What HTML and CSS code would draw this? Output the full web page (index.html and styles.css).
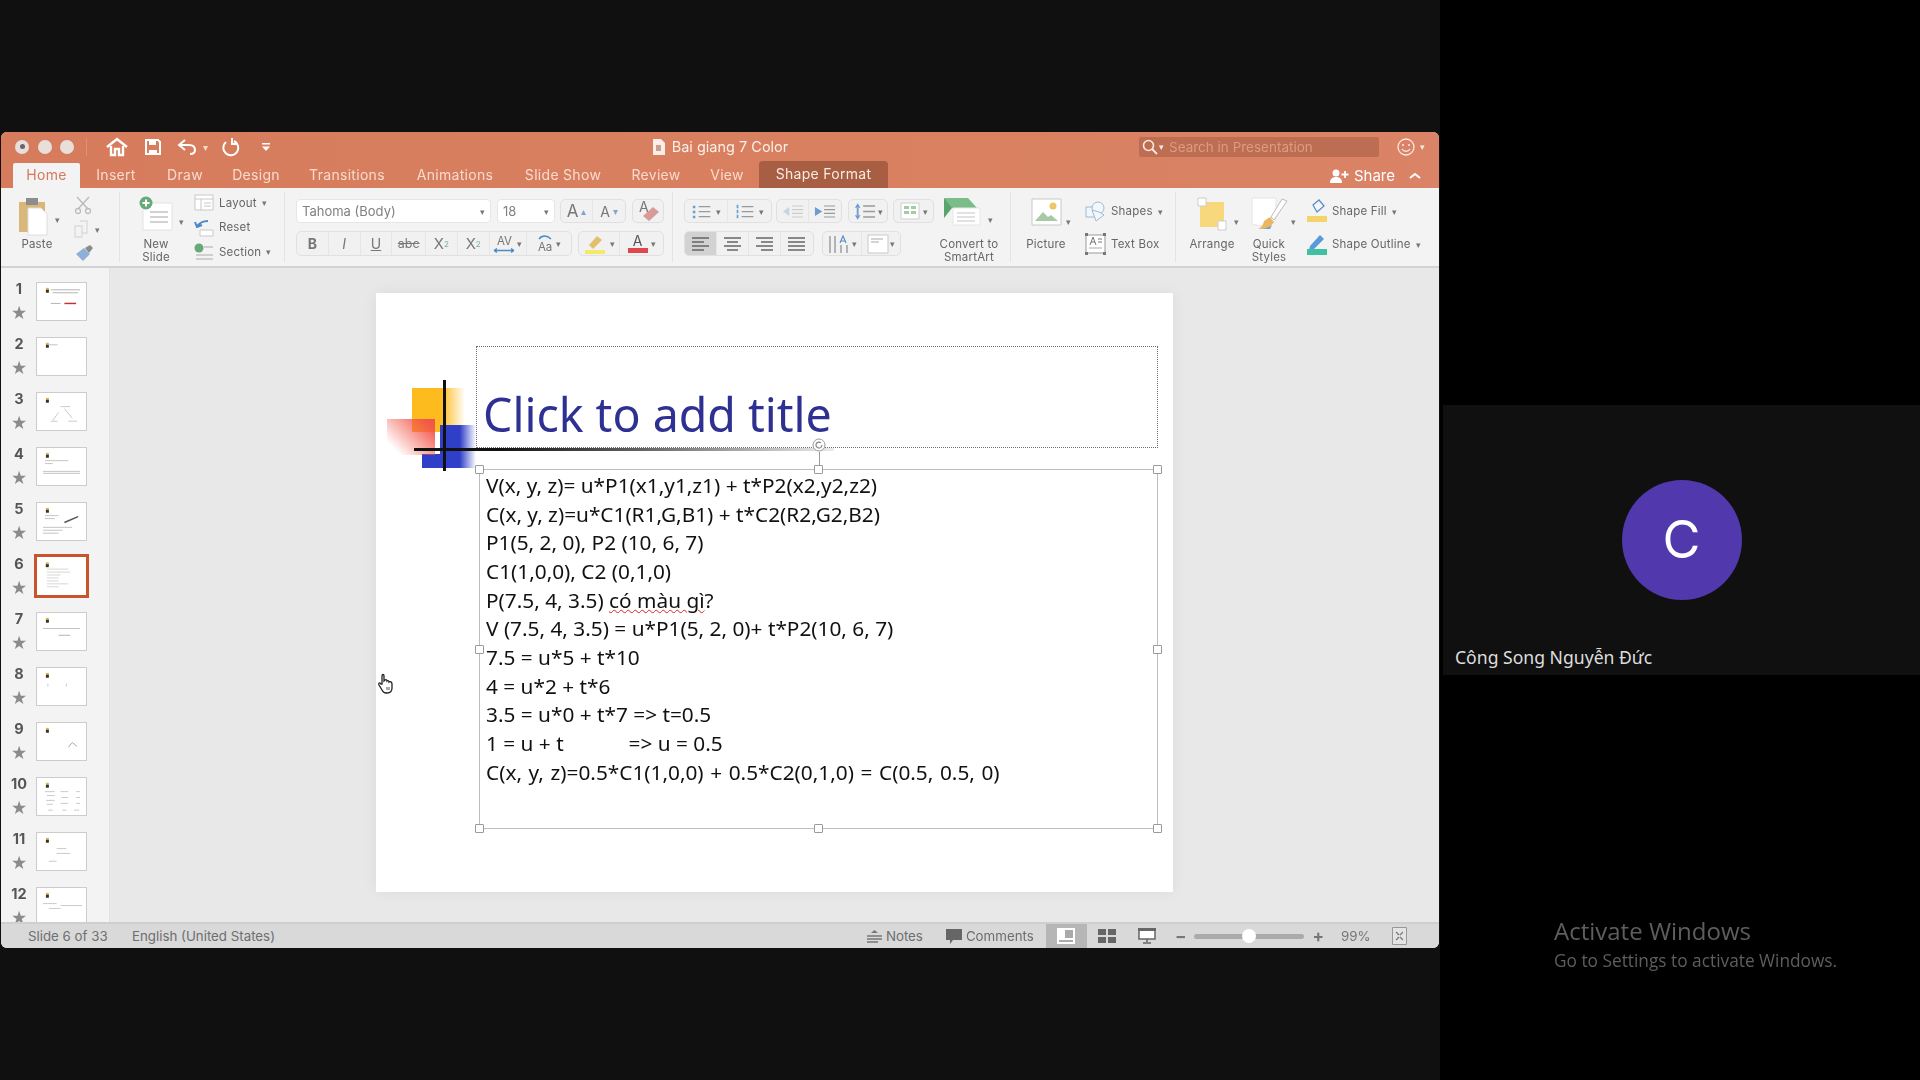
FILE: index.html
```html
<!DOCTYPE html>
<html lang="en">
<head>
<meta charset="utf-8">
<title>Bai giang 7 Color</title>
<link rel="stylesheet" href="styles.css">
</head>
<body>
<main class="share">
  <section class="window">
    <header class="chrome">
      <div class="titlerow">
        <div class="qat">
          <span class="light"><i></i></span><span class="light"></span><span class="light"></span>
          <span class="qat-sep"></span>
          <svg class="q-home" width="24" height="20" viewBox="0 0 24 20"><path d="M2 10 12 2l10 8M6 9v9h4v-6h4v6h4V9" fill="none" stroke="#fff" stroke-width="2.4"/></svg>
          <svg class="q-save" width="18" height="18" viewBox="0 0 18 18"><path d="M2 2h12l2 2v12H2z" fill="none" stroke="#fff" stroke-width="2"/><path d="M5 2h7v5H5zM5 12h8v4H5z" fill="#fff"/></svg>
          <svg class="q-undo" width="20" height="18" viewBox="0 0 20 18"><path d="M8 2 2 7l6 5M2 7h10c4 0 6 2 6 5s-2 4-5 4" fill="none" stroke="#fff" stroke-width="2"/></svg>
          <span class="q-dd">▾</span>
          <svg class="q-redo" width="20" height="20" viewBox="0 0 20 20"><path d="M13 4a7.5 7.5 0 1 1-8 1M11 1v6h6" fill="none" stroke="#fff" stroke-width="2"/></svg>
          <svg class="q-more" width="10" height="10" viewBox="0 0 10 10"><path d="M1 1h8v1.5H1z" fill="#fff"/><path d="M1 4.500h8L5 9z" fill="#fff"/></svg>
        </div>
        <div class="doc">
          <svg width="14" height="16" viewBox="0 0 14 16"><path d="M1 0h8l4 4v12H1z" fill="#fbeee8"/><path d="M4 6h5v6H4z" fill="#c9a08f"/></svg>
          <span>Bai giang 7 Color</span>
        </div>
        <div class="titleright">
          <div class="search">
            <svg width="16" height="16" viewBox="0 0 16 16"><circle cx="6.500" cy="6.500" r="5" fill="none" stroke="#fbe9e2" stroke-width="1.600"/><path d="m10 10 5 5" stroke="#fbe9e2" stroke-width="1.800"/></svg>
            <span class="search-dd">▾</span>
            <span>Search in Presentation</span>
          </div>
          <svg class="smile" width="18" height="18" viewBox="0 0 18 18"><circle cx="9" cy="9" r="8" fill="none" stroke="#fbe9e2" stroke-width="1.300"/><circle cx="6" cy="7" r="1.100" fill="#fbe9e2"/><circle cx="12" cy="7" r="1.100" fill="#fbe9e2"/><path d="M5 11c2 3 6 3 8 0" fill="none" stroke="#fbe9e2" stroke-width="1.300"/></svg>
          <span class="smile-dd">▾</span>
        </div>
      </div>
      <nav class="tabs">
        <span class="tab tab-home">Home</span>
        <span class="tab tab-insert">Insert</span>
        <span class="tab tab-draw">Draw</span>
        <span class="tab tab-design">Design</span>
        <span class="tab tab-trans">Transitions</span>
        <span class="tab tab-anim">Animations</span>
        <span class="tab tab-show">Slide Show</span>
        <span class="tab tab-review">Review</span>
        <span class="tab tab-view">View</span>
        <span class="tab tab-format">Shape Format</span>
        <div class="share-btn">
          <svg width="19" height="14" viewBox="0 0 19 14"><circle cx="6" cy="4" r="3.500" fill="#fff"/><path d="M0 14c0-5 3-6 6-6s6 1 6 6z" fill="#fff"/><path d="M15 2v7M11.500 5.500h7" stroke="#fff" stroke-width="1.800"/></svg>
          <span>Share</span>
          <svg class="chev" width="12" height="8" viewBox="0 0 12 8"><path d="m1 6 5-4 5 4" fill="none" stroke="#fff" stroke-width="2"/></svg>
        </div>
      </nav>
    </header>

    <div class="ribbon">
      <div class="group g-clip">
        <div class="big b-paste">
          <svg class="big-icon" width="36" height="43" viewBox="0 0 36 43"><path d="M0 7h26v30H0z" fill="#d9b779"/><path d="M7 3h12v7H7z" fill="#8d8d8d"/><path d="M9 13h13l6 6v21H9z" fill="#fff" stroke="#ddd"/></svg>
          <span class="label">Paste</span>
        </div>
        <span class="dd dd-paste">▾</span>
        <div class="clip-tools">
          <svg width="18" height="18" viewBox="0 0 18 18"><path d="m3 1 11 12M15 1 4 13" stroke="#bdbdbd" stroke-width="1.500"/><circle cx="4" cy="15" r="2.500" fill="none" stroke="#bdbdbd" stroke-width="1.300"/><circle cx="14" cy="15" r="2.500" fill="none" stroke="#bdbdbd" stroke-width="1.300"/></svg>
          <div class="copy"><svg width="16" height="18" viewBox="0 0 16 18"><path d="M1 6h7v11H1zM6 1h7v12H8" fill="none" stroke="#dcdcdc" stroke-width="1.400"/></svg><span class="dd">▾</span></div>
          <svg width="20" height="18" viewBox="0 0 20 18"><path d="M11 4l5-3 3 3-4 5z" fill="#8a8a8a"/><path d="M2 10l8-6 6 6-7 7z" fill="#8fb0d6"/></svg>
        </div>
      </div>

      <div class="group g-slides">
        <div class="big b-new">
          <svg class="big-icon" width="34" height="43" viewBox="0 0 34 43"><path d="M4 8h29v27H4z" fill="#fff" stroke="#e2e2e2"/><path d="M11 17h18M11 22h18M11 27h18" stroke="#c4c4c4" stroke-width="1.300"/><circle cx="7" cy="8" r="6.500" fill="#66aa7a"/><path d="M7 4.500v7M3.500 8h7" stroke="#fff" stroke-width="2"/></svg>
          <span class="label">New<br>Slide</span>
        </div>
        <span class="dd dd-new">▾</span>
        <div class="mini-list">
          <div class="mini"><svg width="20" height="17" viewBox="0 0 20 17"><path d="M1 1h18v15H1z" fill="#fff" stroke="#c8c8c8"/><path d="M1 5h18M7 5v11M10 9h7M10 12h7" stroke="#c8c8c8"/></svg><span>Layout</span><span class="dd">▾</span></div>
          <div class="mini"><svg width="20" height="19" viewBox="0 0 20 19"><path d="M6 12h13v6H6z" fill="#fff" stroke="#c8c8c8"/><path d="M14 3C8 3 5 5 3 9M1 4l2 5 5-2" fill="none" stroke="#4a8ac6" stroke-width="2"/></svg><span>Reset</span></div>
          <div class="mini"><svg width="20" height="18" viewBox="0 0 20 18"><circle cx="5" cy="5" r="4.500" fill="#66aa7a"/><path d="M10 4h9M2 12h17M2 16h17" stroke="#c4c4c4" stroke-width="1.400"/></svg><span>Section</span><span class="dd">▾</span></div>
        </div>
      </div>

      <div class="group g-font">
        <div class="row">
          <div class="select s-font"><span>Tahoma (Body)</span><span class="dd">▾</span></div>
          <div class="select s-size"><span>18</span><span class="dd">▾</span></div>
          <div class="seg s-grow"><span class="btn"><b class="aa">A</b><i class="up">▴</i></span><span class="btn"><b class="aa small">A</b><i class="up">▾</i></span></div>
          <div class="seg s-clear">
            <span class="clear-a">A</span>
            <svg width="18" height="16" viewBox="0 0 18 16"><path d="m1 10 10-9 6 5-10 9z" fill="#d99a9a"/></svg>
          </div>
        </div>
        <div class="row">
          <div class="seg s-style">
            <span class="btn w-b"><b>B</b></span><span class="btn w-b"><em>I</em></span><span class="btn w-b"><u>U</u></span><span class="btn w-abc"><s>abc</s></span><span class="btn w-b sup">X<sup>2</sup></span><span class="btn w-b sup">X<sub>2</sub></span>
            <span class="btn w-av"><span class="stack"><span>AV</span><svg width="22" height="5" viewBox="0 0 22 5"><path d="M1 2.500h20M1 2.500l3-2M1 2.500l3 2M21 2.500l-3-2M21 2.500l-3 2" stroke="#4a8ac6" stroke-width="1.300" fill="none"/></svg></span><span class="dd">▾</span></span>
            <span class="btn w-aa"><span class="stack"><svg width="16" height="5" viewBox="0 0 16 5"><path d="M2 4c3-4 8-4 12 0" stroke="#4a8ac6" stroke-width="1.400" fill="none"/></svg><span>Aa</span></span><span class="dd">▾</span></span>
          </div>
          <div class="seg s-color">
            <span class="btn w-hl"><svg width="24" height="22" viewBox="0 0 24 22"><path d="m6 12 8-9 5 4-9 9z" fill="#e2bf6f"/><path d="M2 17h20v4H2z" fill="#f2ea68"/></svg><span class="dd">▾</span></span>
            <span class="btn w-col"><span class="stack col"><span>A</span><i></i></span><span class="dd">▾</span></span>
          </div>
        </div>
      </div>

      <div class="group g-para">
        <div class="row">
          <div class="seg s-lists">
            <span class="btn w-list"><svg width="20" height="15" viewBox="0 0 24 18"><path d="M8 3h14M8 9h14M8 15h14" stroke="#999" stroke-width="1.500"/><path d="M1 2h3v3H1zM1 8h3v3H1zM1 14h3v3H1z" fill="#6a9ecf"/></svg><span class="dd">▾</span></span>
            <span class="btn w-list"><svg width="20" height="15" viewBox="0 0 24 18"><path d="M8 3h14M8 9h14M8 15h14" stroke="#999" stroke-width="1.500"/><path d="M2 1h2v4H2zM2 7h2v4H2zM2 13h2v4H2z" fill="#6a9ecf"/></svg><span class="dd">▾</span></span>
          </div>
          <div class="seg s-indent">
            <span class="btn w-ind"><svg width="22" height="15" viewBox="0 0 24 16"><path d="M11 2h12M11 6h12M11 10h12M11 14h12" stroke="#ccc" stroke-width="1.300"/><path d="M8 3v10L1 8z" fill="#c3d6e8"/></svg></span>
            <span class="btn w-ind"><svg width="22" height="15" viewBox="0 0 24 16"><path d="M11 2h12M11 6h12M11 10h12M11 14h12" stroke="#999" stroke-width="1.300"/><path d="M1 3v10l8-5z" fill="#6a9ecf"/></svg></span>
          </div>
          <div class="seg s-spacing"><svg width="22" height="19" viewBox="0 0 24 20"><path d="M10 4h13M10 10h13M10 16h13" stroke="#999" stroke-width="1.500"/><path d="M1 6 4 1l3 5zM1 14l3 5 3-5z" fill="#6a9ecf"/><path d="M3 6h2v8H3z" fill="#6a9ecf"/></svg><span class="dd">▾</span></div>
          <div class="seg s-cols"><svg width="20" height="18" viewBox="0 0 20 18"><path d="M1 1h18v16H1z" fill="#fff" stroke="#cfcfcf"/><path d="M4 4h5v3H4zM11 4h5v3h-5zM4 9h5v3H4zM11 9h5v3h-5z" fill="#a3cba6"/></svg><span class="dd">▾</span></div>
        </div>
        <div class="row">
          <div class="seg s-align">
            <span class="btn w-al on"><svg width="18" height="16" viewBox="0 0 18 16"><path d="M0 2h17M0 6h12M0 10h17M0 14h12" stroke="#666" stroke-width="1.500"/></svg></span>
            <span class="btn w-al"><svg width="18" height="16" viewBox="0 0 18 16"><path d="M0 2h17M3 6h11M0 10h17M3 14h11" stroke="#666" stroke-width="1.500"/></svg></span>
            <span class="btn w-al"><svg width="18" height="16" viewBox="0 0 18 16"><path d="M0 2h17M5 6h12M0 10h17M5 14h12" stroke="#666" stroke-width="1.500"/></svg></span>
            <span class="btn w-al"><svg width="18" height="16" viewBox="0 0 18 16"><path d="M0 2h17M0 6h17M0 10h17M0 14h17" stroke="#666" stroke-width="1.500"/></svg></span>
          </div>
          <div class="seg s-dir">
            <span class="btn w-dir"><svg width="24" height="20" viewBox="0 0 24 20"><path d="M3 2v17M8 2v17M14 11v8M20 11v8" stroke="#999" stroke-width="1.400"/><path d="m13 9 3-7 3 7M14 7h4" stroke="#5b8fc4" stroke-width="1.200" fill="none"/></svg><span class="dd">▾</span></span>
            <span class="btn w-dir"><svg width="22" height="20" viewBox="0 0 22 20"><path d="M1 1h20v18H1z" fill="#fff" stroke="#c8c8c8"/><path d="M4 5h12M4 8h8" stroke="#aaa" stroke-width="1.200"/></svg><span class="dd">▾</span></span>
          </div>
        </div>
      </div>

      <div class="group g-smart">
        <div class="big b-smart">
          <svg class="big-icon" width="42" height="43" viewBox="0 0 42 43"><path d="M0 3h24l9 10H6z" fill="#7cbc89"/><path d="M0 3l8 10-8 10z" fill="#57a56c"/><path d="M9 13h27v17H9z" fill="#fff" stroke="#e6e6e6"/><path d="M13 18h18M13 22h18M13 26h18" stroke="#c4c4c4"/></svg>
          <span class="label">Convert to<br>SmartArt</span>
        </div>
        <span class="dd dd-smart">▾</span>
      </div>

      <div class="group g-insert">
        <div class="big b-pic">
          <svg class="big-icon" width="31" height="43" viewBox="0 0 31 43"><path d="M1 4h29v26H1z" fill="#fff" stroke="#c9c9c9"/><path d="M4 26l8-9 5 5 3-2 7 6z" fill="#a8c9a6"/><circle cx="22" cy="11" r="3.500" fill="#ecc766"/></svg>
          <span class="label">Picture</span>
        </div>
        <span class="dd dd-pic">▾</span>
        <div class="tool-list">
          <div class="mini"><svg width="21" height="21" viewBox="0 0 21 21"><path d="M1 6h9v10H1z" fill="#f4f7fa" stroke="#9bbad6"/><circle cx="13" cy="7" r="6" fill="#f4f7fa" stroke="#9bbad6"/><path d="m7 9 7 2 5 3-8 6z" fill="#f4f7fa" stroke="#9bbad6"/></svg><span>Shapes</span><span class="dd">▾</span></div>
          <div class="mini"><svg width="21" height="22" viewBox="0 0 21 22"><path d="M1 2h19v18H1z" fill="#fff" stroke="#999"/><path d="M4 15h13" stroke="#aaa"/><path d="m5 12 3-8 3 8M6 9h4M13 6h4M13 9h4" stroke="#777" fill="none"/><path d="M0 0h3v3H0zM18 0h3v3h-3zM0 19h3v3H0zM18 19h3v3h-3z" fill="#777"/></svg><span>Text Box</span></div>
        </div>
      </div>

      <div class="group g-draw">
        <div class="big b-arr">
          <svg class="big-icon" width="28" height="43" viewBox="0 0 28 43"><path d="M2 7h24v25H2z" fill="#f7d87c"/><path d="M0 3h8v8H0zM20 26h8v9h-8z" fill="#fff" stroke="#cdcdcd"/></svg>
          <span class="label">Arrange</span>
        </div>
        <span class="dd dd-arr">▾</span>
        <div class="big b-quick">
          <svg class="big-icon" width="38" height="43" viewBox="0 0 38 43"><path d="M2 3h24v18c0 10-10 12-24 8z" fill="#fff" stroke="#e4e4e4"/><path d="M32 4 21 22l3 3 13-19z" fill="#fff" stroke="#bbb"/><path d="M14 26l6-4 4 5-5 6-11 1c4-2 5-4 6-8z" fill="#eab75e"/><path d="M8 34c5 0 11-1 14-4l-2 4z" fill="#6d9dd4"/></svg>
          <span class="label">Quick<br>Styles</span>
        </div>
        <span class="dd dd-quick">▾</span>
        <div class="fill-list">
          <div class="mini"><svg width="20" height="24" viewBox="0 0 20 24"><path d="m6 6 6-5 5 6-7 6z" fill="#f4f7fa" stroke="#5b8fc4" stroke-width="1.300"/><path d="M0 17h20v6H0z" fill="#f4d468"/></svg><span>Shape Fill</span><span class="dd">▾</span></div>
          <div class="mini"><svg width="20" height="24" viewBox="0 0 20 24"><path d="m3 14 10-11 4 4-10 10-5 1z" fill="#5b9ad8"/><path d="M0 17h20v6H0z" fill="#3fc0a0"/></svg><span>Shape Outline</span><span class="dd">▾</span></div>
        </div>
      </div>
    </div>

    <div class="workspace">
      <aside class="sorter">
        <div class="thumb-row"><div class="thumb-meta"><span class="num">1</span><span class="star">★</span></div><svg class="thumb" viewBox="0 0 50 38"><use href="#tm"/><path d="M14 7h30M16 10h26M14 21h10" stroke="#aaa" stroke-width=".9"/><path d="M28 21h12" stroke="#b33" stroke-width="1.500"/></svg></div>
        <div class="thumb-row"><div class="thumb-meta"><span class="num">2</span><span class="star">★</span></div><svg class="thumb" viewBox="0 0 50 38"><use href="#tm"/><path d="M11 7h10" stroke="#bbb" stroke-width=".9"/></svg></div>
        <div class="thumb-row"><div class="thumb-meta"><span class="num">3</span><span class="star">★</span></div><svg class="thumb" viewBox="0 0 50 38"><use href="#tm"/><path d="M24 14h10M22 20l-6 8M28 16l8 10M14 29h7M32 29h9" stroke="#c4c4c4" stroke-width=".9" fill="none"/></svg></div>
        <div class="thumb-row"><div class="thumb-meta"><span class="num">4</span><span class="star">★</span></div><svg class="thumb" viewBox="0 0 50 38"><use href="#tm"/><path d="M8 13h24M8 16h8M6 24h38M6 26h38" stroke="#bbb" stroke-width=".9"/></svg></div>
        <div class="thumb-row"><div class="thumb-meta"><span class="num">5</span><span class="star">★</span></div><svg class="thumb" viewBox="0 0 50 38"><use href="#tm"/><path d="M8 13h14M8 16h10M6 25h30M6 28h20M6 31h16" stroke="#bbb" stroke-width=".9"/><path d="M28 20l14-6" stroke="#555" stroke-width="1.500"/></svg></div>
        <div class="thumb-row current"><div class="thumb-meta"><span class="num">6</span><span class="star">★</span></div><svg class="thumb" viewBox="0 0 50 38"><use href="#tm"/><path d="M10 12h22M10 15h24M10 18h14M10 21h12M10 24h12M10 27h22M10 30h12" stroke="#c4c4c4" stroke-width=".7"/></svg></div>
        <div class="thumb-row"><div class="thumb-meta"><span class="num">7</span><span class="star">★</span></div><svg class="thumb" viewBox="0 0 50 38"><use href="#tm"/><path d="M6 16h38M22 23h12" stroke="#c4c4c4" stroke-width="1.100"/></svg></div>
        <div class="thumb-row"><div class="thumb-meta"><span class="num">8</span><span class="star">★</span></div><svg class="thumb" viewBox="0 0 50 38"><use href="#tm"/><path d="M11 16v3M30 16v3" stroke="#ccc" stroke-width="1"/></svg></div>
        <div class="thumb-row"><div class="thumb-meta"><span class="num">9</span><span class="star">★</span></div><svg class="thumb" viewBox="0 0 50 38"><use href="#tm"/><path d="M32 25l4-5 5 4" stroke="#aaa" stroke-width="1" fill="none"/></svg></div>
        <div class="thumb-row"><div class="thumb-meta"><span class="num">10</span><span class="star">★</span></div><svg class="thumb" viewBox="0 0 50 38"><use href="#tm"/><path d="M8 14h10M10 18h8M9 23h9M10 27h6M24 14h8M25 20h7M24 26h8M40 14h4M40 20h4M40 26h4M11 33h5M26 33h4M38 33h5" stroke="#c4c4c4" stroke-width=".9"/></svg></div>
        <div class="thumb-row"><div class="thumb-meta"><span class="num">11</span><span class="star">★</span></div><svg class="thumb" viewBox="0 0 50 38"><use href="#tm"/><path d="M20 16h10M20 21h14M12 29h8" stroke="#c4c4c4" stroke-width=".9"/></svg></div>
        <div class="thumb-row"><div class="thumb-meta"><span class="num">12</span><span class="star">★</span></div><svg class="thumb" viewBox="0 0 50 38"><use href="#tm"/><path d="M6 16h14M24 18h22M12 21h12" stroke="#c4c4c4" stroke-width=".9"/></svg></div>
      </aside>

      <div class="canvas">
        <article class="slide">
          <div class="logo">
            <span class="lg-yellow"></span>
            <span class="lg-blue"></span>
            <span class="lg-blue2"></span>
            <span class="lg-red"></span>
            <span class="lg-v"></span>
            <span class="lg-h"></span>
          </div>
          <div class="title-box"><span>Click to add title</span></div>
          <div class="rotate"><svg width="14" height="14" viewBox="0 0 14 14"><circle cx="7" cy="7" r="6" fill="#fff" stroke="#999"/><path d="M10 7a3 3 0 1 1-1-2.200" fill="none" stroke="#888" stroke-width="1.200"/></svg></div>
          <div class="text-box">
            <p>V(x, y, z)= u*P1(x1,y1,z1) + t*P2(x2,y2,z2)</p>
            <p>C(x, y, z)=u*C1(R1,G,B1) + t*C2(R2,G2,B2)</p>
            <p>P1(5, 2, 0), P2 (10, 6, 7)</p>
            <p>C1(1,0,0), C2 (0,1,0)</p>
            <p>P(7.5, 4, 3.5) <span class="spell">có màu gì</span>?</p>
            <p>V (7.5, 4, 3.5) = u*P1(5, 2, 0)+ t*P2(10, 6, 7)</p>
            <p>7.5 = u*5 + t*10</p>
            <p>4 = u*2 + t*6</p>
            <p>3.5 = u*0 + t*7 =&gt; t=0.5</p>
            <p>1 = u + t            =&gt; u = 0.5</p>
            <p class="long">C(x, y, z)=0.5*C1(1,0,0) + 0.5*C2(0,1,0) = C(0.5, 0.5, 0)</p>
            <i class="h h-tl"></i><i class="h h-tc"></i><i class="h h-tr"></i><i class="h h-ml"></i><i class="h h-mr"></i><i class="h h-bl"></i><i class="h h-bc"></i><i class="h h-br"></i>
          </div>
        </article>
        <svg class="cursor" width="18" height="21" viewBox="0 0 18 21"><path d="M5 11V3c0-2 2-2 2 0v5l1-1c1-1 2 0 2 1 1-1 2 0 2 1 1-1 3 0 3 2v4c0 3-2 5-5 5H9c-2 0-3-1-4-3l-3-5c-1-2 1-3 2-1z" fill="#fff" stroke="#222" stroke-width="1.300"/><path d="M9 14h4v3H9z" fill="#aaa"/></svg>
      </div>
    </div>

    <footer class="status">
      <span class="st-slide">Slide 6 of 33</span>
      <span class="st-lang">English (United States)</span>
      <div class="st-right">
        <svg class="st-notes" width="15" height="15" viewBox="0 0 15 15"><path d="M0 7h15M0 10h15M0 13h11" stroke="#777" stroke-width="1.300"/><path d="m4 4 3.500-3L11 4z" fill="#777"/></svg>
        <span class="st-notes-t">Notes</span>
        <svg class="st-comm" width="16" height="15" viewBox="0 0 16 15"><path d="M0 0h16v11H7l-3 4v-4H0z" fill="#666"/></svg>
        <span class="st-comm-t">Comments</span>
        <span class="view-on"><svg width="18" height="16" viewBox="0 0 18 16"><path d="M0 0h18v16H0z" fill="#fff"/><path d="M8 2h8v8H8z" fill="#aaa"/><path d="M2 12h14v2H2z" fill="#aaa"/></svg></span>
        <svg class="view-grid" width="18" height="14" viewBox="0 0 18 14"><path d="M0 0h8v6H0zM10 0h8v6h-8zM0 8h8v6H0zM10 8h8v6h-8z" fill="#666"/></svg>
        <svg class="view-pres" width="18" height="16" viewBox="0 0 18 16"><path d="M1 1h16v10H1z" fill="#fff" stroke="#666" stroke-width="1.500"/><path d="M0 0h18v3H0z" fill="#666"/><path d="M9 11v3M5 15h8" stroke="#666" stroke-width="1.500"/></svg>
        <span class="zoom-sign">−</span>
        <span class="slider"><i></i></span>
        <span class="zoom-sign plus">+</span>
        <span class="pct">99%</span>
        <svg class="fit" width="15" height="18" viewBox="0 0 15 18"><path d="M.5.500h14v17H.5z" fill="#e4e4e4" stroke="#999"/><path d="M4 5l3 3M11 5 8 8M4 13l3-3M11 13l-3-3" stroke="#777" stroke-width="1.200"/></svg>
      </div>
    </footer>
  </section>
</main>

<aside class="people">
  <div class="tile">
    <div class="avatar">C</div>
    <div class="name">Công Song Nguyễn Đức</div>
  </div>
  <div class="activate">
    <div class="act-1">Activate Windows</div>
    <div class="act-2">Go to Settings to activate Windows.</div>
  </div>
</aside>

<svg class="defs" width="0" height="0">
  <defs>
    <linearGradient id="fade"><stop offset="0" stop-color="#222"/><stop offset="1" stop-color="#fff"/></linearGradient>
    <g id="tm"><rect width="50" height="38" fill="#fff"/><path d="M9 5h3v4H9z" fill="#d8b44a"/><path d="M9 7h3v3H9z" fill="#333"/><path d="M9 9h34" stroke="url(#fade)" stroke-width="1"/></g>
  </defs>
</svg>
</body>
</html>
```
FILE: styles.css
```css
* { box-sizing: border-box; }
html, body { margin: 0; height: 100%; }
body {
  width: 1920px; height: 1080px; overflow: hidden;
  background: #000;
  display: flex;
  font-family: "Inter", "Liberation Sans", sans-serif;
  color: #555;
}
.defs { position: absolute; }
.share { width: 1440px; height: 1080px; background: #101010; padding: 132px 1px 0 1px; }
.window {
  width: 1438px; height: 816px;
  display: flex; flex-direction: column;
  border-radius: 6px; overflow: hidden;
  filter: blur(.55px);
  background: #f3f3f3;
}

/* title bar */
.chrome { background: linear-gradient(90deg, #d67c5d, #d8805f 60%, #da8366); color: #f9e3d9; height: 56px; flex: none; }
.titlerow { display: grid; grid-template-columns: 1fr auto 1fr; height: 31px; padding-bottom: 2px; align-items: center; }
.qat { display: flex; align-items: center; padding-left: 14px; }
.light { width: 14px; height: 14px; border-radius: 50%; background: #e6dfdb; margin-right: 8.500px; display: flex; align-items: center; justify-content: center; }
.light i { width: 5px; height: 5px; border-radius: 50%; background: #666; }
.qat-sep { width: 1px; height: 18px; background: #dd9378; margin: 0 18px 0 3px; }
.q-home { margin-right: 15px; }
.q-save { margin-right: 15px; }
.q-undo { margin-right: 6px; }
.q-dd { font-size: 10px; color: #f6d9cc; margin-right: 13px; }
.q-more { margin-left: 20px; }
.doc { display: flex; align-items: center; gap: 6px; font-size: 14.500px; color: #fbeee8; }
.titleright { display: flex; justify-content: flex-end; align-items: center; padding-right: 14px; }
.search { width: 240px; height: 20px; margin-right: 18px; background: #bd6d51; border-radius: 2px; display: flex; align-items: center; padding-left: 3px; font-size: 13.500px; color: #dc9b83; }
.search-dd { font-size: 9px; color: #fbe9e2; margin: 0 5px 0 1px; }
.smile { margin-right: 5px; }
.smile-dd { font-size: 9px; color: #fbe9e2; }
.tabs { display: flex; height: 25px; align-items: flex-end; position: relative; font-size: 14px; color: #f8dbce; }
.tab { height: 25px; line-height: 24px; text-align: center; letter-spacing: .3px; flex: none; }
.tab-home { margin-left: 12px; width: 67px; background: #f3f3f3; color: #d47a5c; border-radius: 2px 2px 0 0; }
.tab-insert { margin-left: 3px; width: 66px; }
.tab-draw { margin-left: 6px; width: 60px; }
.tab-design { margin-left: 6px; width: 70px; }
.tab-trans { margin-left: 8px; width: 96px; }
.tab-anim { margin-left: 10px; width: 100px; }
.tab-show { margin-left: 10px; width: 96px; }
.tab-review { margin-left: 9px; width: 72px; }
.tab-view { margin-left: 8px; width: 54px; }
.tab-format { margin-left: 5px; width: 129px; height: 27px; line-height: 26px; background: #a85e42; color: #fbe9e1; border-radius: 4px 4px 0 0; }
.share-btn { margin-left: auto; display: flex; align-items: center; height: 25px; padding-right: 18px; gap: 5px; color: #fff; font-size: 15px; }
.chev { margin-left: 9px; }

/* ribbon */
.ribbon { display: flex; height: 80px; flex: none; background: #f3f3f3; border-bottom: 2px solid #d2d2d2; }
.ribbon svg { overflow: visible; }
.group { flex: none; display: flex; height: 70px; margin-top: 4px; border-right: 1px solid #e4e4e4; padding-top: 3px; }
.g-clip { width: 119px; padding-left: 16px; }
.g-slides { width: 165px; padding-left: 18px; }
.g-font { width: 388px; padding: 7px 0 0 11px; flex-direction: column; gap: 8px; }
.g-para { width: 262px; padding: 7px 0 0 11px; flex-direction: column; gap: 8px; border-right: 0; }
.g-smart { width: 76px; padding-left: 3px; }
.g-insert { width: 165px; padding-left: 15px; }
.g-draw { border-right: 0; padding-left: 13px; flex: 1; }
.big { display: flex; flex-direction: column; align-items: center; flex: none; }
.big-icon { display: block; flex: none; }
.label { font-size: 11.500px; line-height: 13px; text-align: center; color: #666; white-space: nowrap; letter-spacing: .2px; }
.dd { font-size: 9px; color: #777; line-height: 1; flex: none; }
.dd-paste { margin: 20px 0 0 -2px; width: 18px; }
.b-paste { width: 40px; }
.clip-tools { display: flex; flex-direction: column; align-items: flex-start; gap: 6px; margin-left: 1px; padding-top: 1px; }
.copy { display: flex; align-items: center; gap: 5px; }
.b-new { width: 36px; }
.dd-new { margin: 22px 7px 0 5px; }
.mini-list { display: flex; flex-direction: column; gap: 3.500px; margin: -3px 0 0 3px; }
.mini { display: flex; align-items: center; gap: 5px; font-size: 11.500px; letter-spacing: .2px; color: #666; height: 22px; white-space: nowrap; }
.row { display: flex; gap: 5px; height: 24px; }
.g-font .row:last-child, .g-para .row:last-child { height: 25px; }
.select { background: #fff; border: 1px solid #e6e6e6; border-radius: 4px; display: flex; align-items: center; justify-content: space-between; padding: 0 5px; font-size: 13px; color: #808080; }
.s-font { width: 195px; }
.s-size { width: 58px; margin-left: 1px; }
.seg { display: flex; align-items: center; background: #f1f1f1; border: 1px solid #e0e0e0; border-radius: 5px; flex: none; }
.btn { display: flex; align-items: center; justify-content: center; height: 100%; border-right: 1px solid #e6e6e6; color: #777; font-size: 14px; gap: 3px; }
.btn:last-child { border-right: 0; }
.s-grow { width: 66px; }
.s-grow .btn { width: 33px; }
.aa { font-size: 17px; font-weight: 400; color: #777; }
.aa.small { font-size: 14px; }
.up { color: #7ea8cf; font-style: normal; font-size: 10px; }
.s-clear { width: 32px; justify-content: center; margin-left: 1px; position: relative; }
.clear-a { position: absolute; left: 6px; top: -1px; font-size: 14px; line-height: 16px; color: #777; }
.s-clear svg { margin: 6px 0 0 6px; }
.stack { display: flex; flex-direction: column; align-items: center; font-size: 11.500px; line-height: 12px; color: #777; gap: 1px; }
.stack.col { font-size: 14px; line-height: 14px; gap: 0; color: #555; }
.stack.col i { width: 20px; height: 5px; background: #e0474c; }
.s-style { width: 276px; }
.w-b { width: 32px; }
.w-abc { width: 34px; font-size: 12.500px; }
.w-av { width: 38px; gap: 2px; }
.w-aa { width: 44px; gap: 3px; }
.sup { font-size: 15px; gap: 0; }
.sup sup, .sup sub { font-size: 8px; color: #8aa; line-height: 0; }
.s-color { width: 86px; margin-left: 1px; }
.w-hl { width: 42px; }
.w-col { width: 44px; }
.g-para .row { gap: 4px; }
.s-lists { width: 88px; }
.w-list { width: 44px; gap: 4px; }
.s-indent { width: 66px; }
.w-ind { width: 33px; }
.s-spacing { width: 40px; margin-left: 2px; justify-content: center; gap: 2px; }
.s-cols { width: 41px; margin-left: 1px; justify-content: center; gap: 3px; }
.s-align { width: 130px; }
.w-al { width: 32.500px; }
.w-al.on { background: #d2d2d2; border-radius: 4px 0 0 4px; }
.s-dir { width: 79px; margin-left: 4px; }
.w-dir { width: 39.500px; gap: 1px; }
.b-smart { width: 62px; }
.b-smart .big-icon { margin-left: -8px; }
.dd-smart { margin: 20px 0 0 -12px; }
.b-pic { width: 40px; }
.dd-pic { margin: 22px 0 0 0; width: 14px; }
.tool-list { display: flex; flex-direction: column; gap: 11px; margin-left: 5px; padding-top: 5px; }
.b-arr { width: 46px; }
.dd-arr { margin: 22px 0 0 -1px; width: 13px; }
.b-quick { width: 44px; }
.dd-quick { margin: 22px 0 0 0; width: 14px; }
.fill-list { display: flex; flex-direction: column; gap: 11px; margin-left: 2px; padding-top: 5px; }

/* workspace */
.workspace { flex: 1; display: flex; min-height: 0; background: #e8e8e8; border-bottom: 2px solid #cfcfcf; }
.sorter { width: 109px; flex: none; background: #f3f3f3; border-right: 1px solid #e1e1e1; padding-top: 11px; overflow: hidden; }
.thumb-row { height: 55px; display: flex; padding-left: 9px; gap: 8px; }
.thumb-meta { width: 18px; display: flex; flex-direction: column; align-items: center; }
.num { font-size: 14.500px; font-weight: 700; color: #555; line-height: 20px; height: 25px; }
.star { font-size: 16px; line-height: 18px; color: #8b8b8b; }
.thumb { width: 51px; height: 39px; border: 1px solid #ccc; background: #fff; flex: none; margin-top: 3px; }
.current .thumb { width: 55px; height: 44px; border: 3px solid #c8532c; margin: 0 0 0 -2px; }
.canvas { flex: 1; position: relative; display: flex; justify-content: center; padding-top: 25px; }
.slide { width: 797px; height: 599px; background: #fff; position: relative; box-shadow: 0 0 14px rgba(0,0,0,.06); font-family: "Noto Sans", "Open Sans", sans-serif; }
.cursor { position: absolute; left: 267px; top: 405px; }

/* slide content */
.logo span { position: absolute; display: block; }
.lg-yellow { left: 36px; top: 95px; width: 53px; height: 44px; background: linear-gradient(90deg, #fdbb1e 55%, #fff); }
.lg-blue { left: 64px; top: 132px; width: 36px; height: 43px; background: linear-gradient(90deg, #2f3fc8 55%, rgba(47,63,200,0)); }
.lg-blue2 { left: 46px; top: 161px; width: 18px; height: 14px; background: #2f3fc8; }
.lg-red { left: 11px; top: 126px; width: 48px; height: 36px; background: linear-gradient(45deg, rgba(255,255,255,0) 15%, #f2554a 90%); }
.lg-v { left: 67px; top: 87px; width: 2.500px; height: 91px; background: #111; }
.lg-h { left: 38px; top: 155px; width: 420px; height: 2.500px; background: linear-gradient(90deg, #111 20%, #666 55%, rgba(190,190,190,.3)); }
.title-box { position: absolute; left: 100px; top: 53px; width: 682px; height: 102px; border: 1.500px dotted #6d6d6d; display: flex; align-items: flex-end; padding: 0 0 0 6px; }
.title-box span { font-size: 46.500px; line-height: 66px; color: #2e3192; white-space: nowrap; }
.rotate { position: absolute; left: 436px; top: 145px; width: 14px; height: 31px; display: flex; flex-direction: column; align-items: center; }
.rotate::after { content: ""; width: 1px; flex: 1; background: #999; }
.text-box { position: absolute; left: 103px; top: 176px; width: 679px; height: 360px; border: 1.500px solid #bdbdbd; padding: 1px 6px; color: #111; font-size: 20.800px; line-height: 28.650px; }
.text-box p { margin: 0; white-space: pre; }
.text-box .long { word-spacing: 1.200px; }
.spell { text-decoration: underline wavy #d22 1px; }
.h { position: absolute; width: 9px; height: 9px; background: #fff; border: 1px solid #9a9a9a; border-radius: 1px; }
.h-tl { left: -5px; top: -5px; } .h-tc { left: 334px; top: -5px; } .h-tr { right: -5px; top: -5px; }
.h-ml { left: -5px; top: 175px; } .h-mr { right: -5px; top: 175px; }
.h-bl { left: -5px; bottom: -5px; } .h-bc { left: 334px; bottom: -5px; } .h-br { right: -5px; bottom: -5px; }

/* status bar */
.status { height: 24px; flex: none; background: #d9d9d9; display: flex; align-items: center; font-size: 13.300px; color: #6e6e6e; padding-left: 27px; }
.st-slide { width: 104px; }
.st-right { margin-left: auto; display: flex; align-items: center; height: 100%; padding-right: 32px; }
.st-notes { margin-right: 4px; }
.st-notes-t { width: 60px; }
.st-comm { margin-right: 4px; }
.st-comm-t { width: 80px; white-space: nowrap; }
.view-on { width: 41px; height: 100%; background: #b6b6b6; display: flex; align-items: center; justify-content: center; }
.view-grid { margin: 0 0 0 11px; }
.view-pres { margin: 0 0 0 22px; }
.zoom-sign { font-size: 17px; font-weight: 700; color: #777; margin-left: 19px; line-height: 1; }
.plus { margin-left: 8px; }
.slider { width: 110px; height: 5px; margin-left: 8px; background: #aaa; border-radius: 3px; position: relative; }
.slider i { position: absolute; left: 48px; top: -4.500px; width: 14px; height: 14px; border-radius: 50%; background: #fff; }
.pct { margin-left: 17px; width: 28px; color: #777; }
.fit { margin-left: 23px; }

/* right column */
.people { width: 480px; height: 1080px; padding: 405px 0 0 3px; position: relative; font-family: "Noto Sans", "Open Sans", sans-serif; }
.tile { height: 270px; background: #101010; position: relative; display: flex; justify-content: center; padding-top: 75px; }
.avatar { width: 120px; height: 120px; border-radius: 50%; background: #5138ad; color: #fff; font: 52px/120px "Inter", "Liberation Sans", sans-serif; text-align: center; }
.name { position: absolute; left: 12px; bottom: 4px; font-size: 17.600px; line-height: 28px; color: #dedede; }
.activate { margin: 239px 0 0 111px; color: #5e5e5e; font-family: "Open Sans", "Noto Sans", sans-serif; }
.act-1 { font-size: 24px; line-height: 34px; }
.act-2 { font-size: 17.300px; line-height: 26px; }
```
